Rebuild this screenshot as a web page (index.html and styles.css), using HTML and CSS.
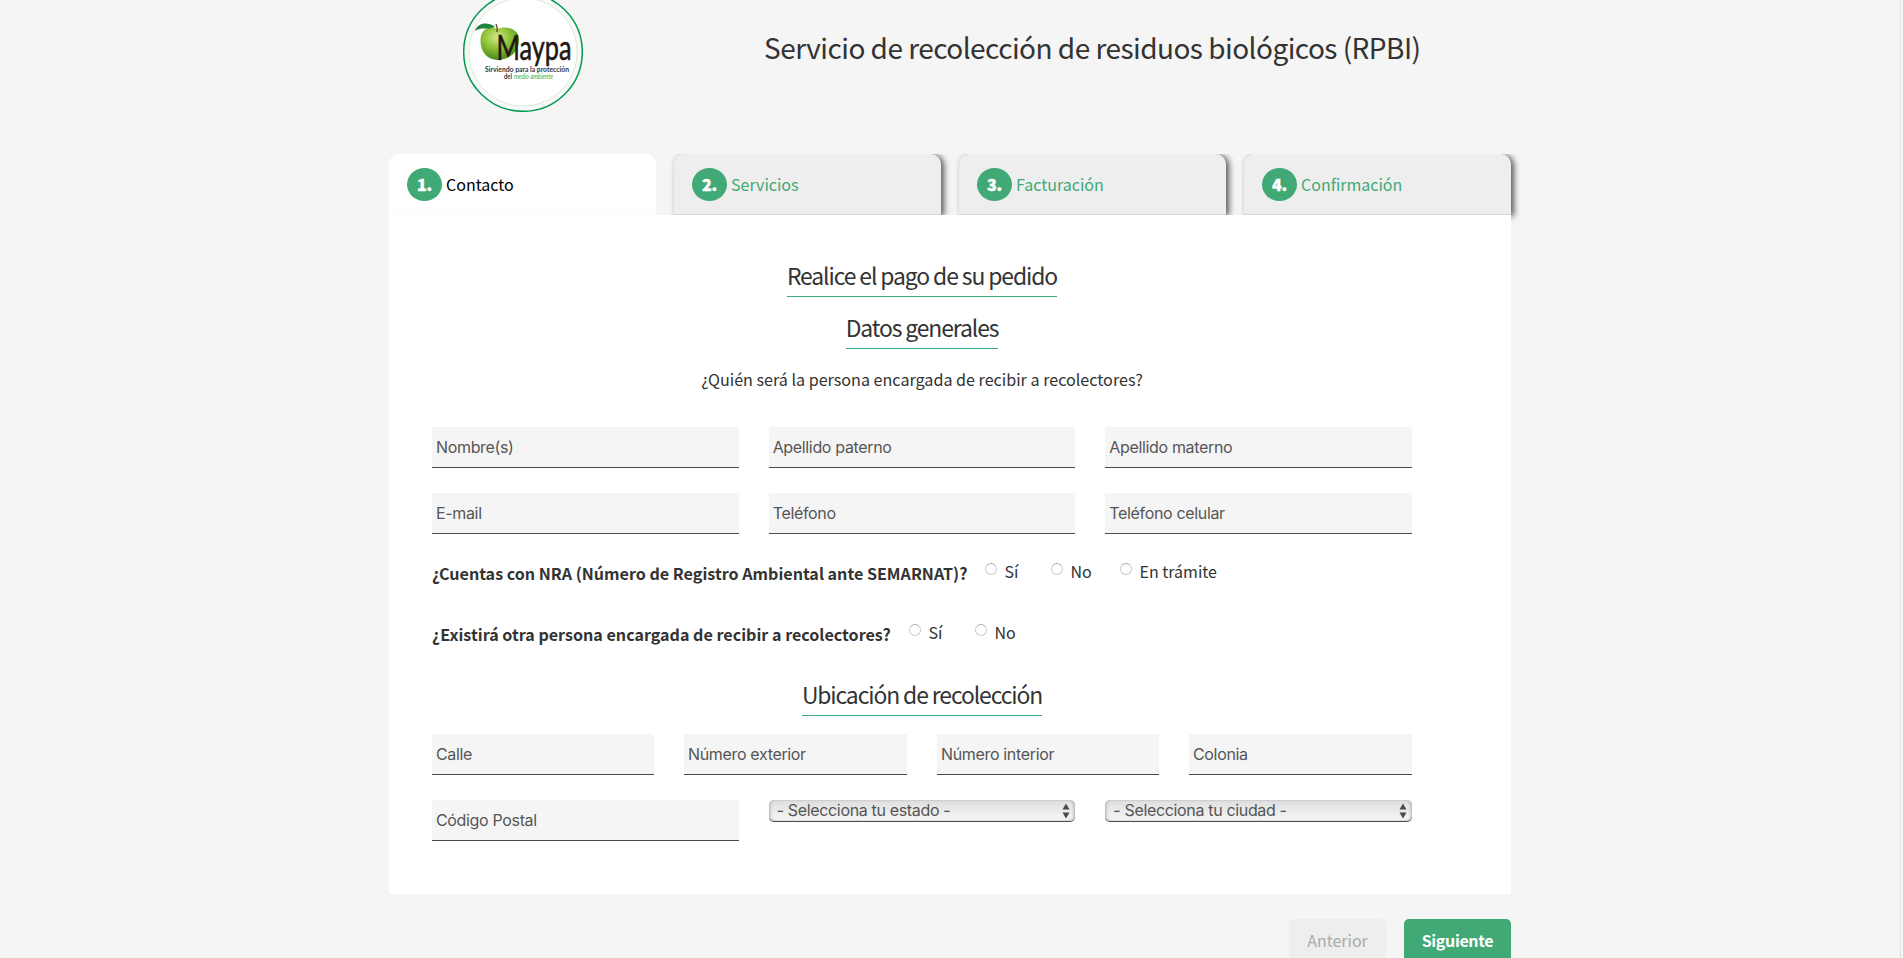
FILE: index.html
```html
<!DOCTYPE html>
<html lang="es">
<head>
<meta charset="utf-8">
<title>Maypa</title>
<link rel="stylesheet" href="styles.css">
</head>
<body>
<div class="page">
  <header class="header">
    <svg class="logo" width="120" height="112" viewBox="0 0 120 112">
      <defs>
        <radialGradient id="apple" cx="0.42" cy="0.3" r="0.75">
          <stop offset="0" stop-color="#d3e88a"/>
          <stop offset="0.4" stop-color="#96c83d"/>
          <stop offset="0.8" stop-color="#5d9a22"/>
          <stop offset="1" stop-color="#3f7a1c"/>
        </radialGradient>
      </defs>
      <circle cx="60" cy="52" r="59.3" fill="#f8f8f8" stroke="#049a50" stroke-width="1.5"/>
      <circle cx="60" cy="52" r="54" fill="#fff" stroke="#b5dcb2" stroke-width="0.8" stroke-dasharray="2 1"/>
      <path d="M34 29 C28 25 18 28 17.500 40 C17 52 25 60 34 60 C48 60 57 50 56 38 C55 29 44 25 34 29Z" fill="url(#apple)"/>
      <path d="M12 31 C14 23 24 21 32 26.500 C26 31 19 26 12 31Z" fill="#1f8540"/>
      <path d="M34 32 C34.500 28 34 26 33 24" fill="none" stroke="#6b3f1e" stroke-width="1.300"/>
      <text class="logo-name" x="33.500" y="60" textLength="75" lengthAdjust="spacingAndGlyphs">Maypa</text>
      <text class="logo-tag" x="22" y="72" textLength="84" lengthAdjust="spacingAndGlyphs">Sirviendo para la protección</text>
      <text class="logo-tag" x="41" y="79" textLength="8" lengthAdjust="spacingAndGlyphs">del</text>
      <text class="logo-tag logo-green" x="51" y="79" textLength="39" lengthAdjust="spacingAndGlyphs">medio ambiente</text>
    </svg>
    <h1 class="title">Servicio de recolección de residuos biológicos (RPBI)</h1>
  </header>

  <nav class="tabs">
    <a class="tab tab-current"><span class="num">1.</span>Contacto</a>
    <a class="tab"><span class="num">2.</span>Servicios</a>
    <a class="tab"><span class="num">3.</span>Facturación</a>
    <a class="tab"><span class="num">4.</span>Confirmación</a>
  </nav>

  <main class="panel">
    <h2 class="heading"><span>Realice el pago de su pedido</span></h2>
    <h2 class="heading"><span>Datos generales</span></h2>
    <p class="lead">¿Quién será la persona encargada de recibir a recolectores?</p>

    <div class="row">
      <div class="field">Nombre(s)</div>
      <div class="field">Apellido paterno</div>
      <div class="field">Apellido materno</div>
    </div>
    <div class="row">
      <div class="field">E-mail</div>
      <div class="field">Teléfono</div>
      <div class="field">Teléfono celular</div>
    </div>

    <div class="question">
      <strong class="ask ask-nra">¿Cuentas con NRA (Número de Registro Ambiental ante SEMARNAT)?</strong>
      <label class="opt opt-yes"><i class="radio"></i>Sí</label>
      <label class="opt opt-no"><i class="radio"></i>No</label>
      <label class="opt"><i class="radio"></i>En trámite</label>
    </div>
    <div class="question">
      <strong class="ask ask-other">¿Existirá otra persona encargada de recibir a recolectores?</strong>
      <label class="opt opt-yes"><i class="radio"></i>Sí</label>
      <label class="opt"><i class="radio"></i>No</label>
    </div>

    <h2 class="heading heading-place"><span>Ubicación de recolección</span></h2>
    <div class="row row-four">
      <div class="field">Calle</div>
      <div class="field">Número exterior</div>
      <div class="field">Número interior</div>
      <div class="field">Colonia</div>
    </div>
    <div class="row">
      <div class="field">Código Postal</div>
      <div class="select">- Selecciona tu estado -<svg width="8" height="16" viewBox="0 0 8 16"><path d="M4 .5 7.500 6.500H.5ZM4 15.500.5 9.500H7.500Z" fill="#4a4a4a"/></svg></div>
      <div class="select">- Selecciona tu ciudad -<svg width="8" height="16" viewBox="0 0 8 16"><path d="M4 .5 7.500 6.500H.5ZM4 15.500.5 9.500H7.500Z" fill="#4a4a4a"/></svg></div>
    </div>
  </main>

  <footer class="actions">
    <a class="btn btn-prev">Anterior</a>
    <a class="btn btn-next">Siguiente</a>
  </footer>
</div>
<div class="scroll-edge"></div>
</body>
</html>
```
FILE: styles.css
```css
* { box-sizing: border-box; }

html, body { height: 100%; }

body {
  margin: 0;
  overflow: hidden;
  background: #f5f5f5;
  color: #333;
  font-family: "Noto Sans CJK SC", "Noto Sans", sans-serif;
  font-size: 16px;
}

.page { width: 1122px; margin-left: 389px; }

.header {
  display: flex;
  align-items: flex-start;
  height: 154px;
  padding-left: 74px;
}

.logo { display: block; flex: none; }
.logo-name { font: 34px "Lato", sans-serif; fill: #231815; stroke: #231815; stroke-width: .6px; }
.logo-tag { font: bold 7.5px "Lato", sans-serif; fill: #333; }
.logo-green { font-weight: normal; font-style: italic; fill: #43ab45; }

.title {
  margin: 27px 0 0 181px;
  font-size: 28px;
  font-weight: 400;
  letter-spacing: -.53px;
  line-height: 41px;
  white-space: nowrap;
}

.tabs { display: flex; gap: 18px; height: 61px; }

.tab {
  display: flex;
  align-items: flex-start;
  width: 267px;
  height: 61px;
  padding: 14px 18px 0;
  border-bottom: 1px solid #d5d5d5;
  border-radius: 10px 10px 0 0;
  background: #eee;
  box-shadow: 3px 1px 6px rgba(0, 0, 0, .65);
  clip-path: inset(0 -14px -7px -6px);
  color: #41a975;
  line-height: 33px;
}
.tab-current { background: #fff; border-color: #fafafa; box-shadow: none; color: #000; }

.num {
  width: 35px;
  height: 33px;
  margin-right: 4px;
  border-radius: 50%;
  background: #41a975;
  color: #fff;
  font-weight: 900;
  text-align: center;
  letter-spacing: -.2px;
  -webkit-text-stroke: .4px #fff;
}

.panel {
  position: relative;
  height: 679px;
  padding: 44px 99px 0 43px;
  background: #fff;
}

.heading {
  width: 980px;
  height: 52px;
  margin: 0;
  font-size: 22.9px;
  font-weight: 400;
  letter-spacing: -1.1px;
  line-height: 32px;
  text-align: center;
}
.heading span { display: inline-block; height: 38px; border-bottom: 1px solid #41a975; }
.heading-place { height: 56px; margin-top: -3px; }

.lead { margin: 1px 0 0; height: 63px; font-size: 16.13px; line-height: 30px; text-align: center; }

.row { display: grid; grid-template-columns: repeat(3, 1fr); gap: 30px; height: 66px; align-items: start; }
.row-four { grid-template-columns: 222px 223px 222px 223px; }

.field, .select {
  border-bottom: 1px solid #4a4a4a;
  color: #555;
  font-family: "Inter", sans-serif;
  font-size: 16px;
  letter-spacing: -.34px;
}
.field { height: 41px; padding-left: 4px; background: #f5f5f5; line-height: 40px; }

.select {
  display: flex;
  justify-content: space-between;
  align-items: center;
  height: 22px;
  padding: 0 5px 0 8px;
  border-radius: 5px;
  background: linear-gradient(#dedede, #f6f6f6);
  box-shadow: inset 2px 0 3px -1px #aaa, inset -2px 0 3px -1px #aaa;
  line-height: 21px;
}

.question { display: flex; align-items: flex-start; height: 61px; line-height: 24px; }
.ask { flex: none; padding-top: 2px; font-size: 16.1px; font-weight: 700; white-space: nowrap; }
.ask-nra { width: 553px; }
.ask-other { width: 477px; }
.opt { display: flex; gap: 7.5px; margin-right: 29px; }
.opt-yes { width: 66px; margin-right: 0; }
.opt-no { width: 69px; margin-right: 0; }
.radio {
  width: 12px;
  height: 12px;
  margin-top: 4px;
  border: 1px solid #ccc;
  border-top-color: #aaa;
  border-radius: 50%;
  background: #fff;
}

.actions { display: flex; justify-content: flex-end; gap: 18px; padding-top: 25px; }
.btn { width: 107px; height: 50px; border-radius: 5px; line-height: 42px; text-align: center; }
.btn-prev { width: 97px; background: #eee; color: #aaa; }
.btn-next { background: #41a975; color: #fff; font-weight: 700; letter-spacing: -.35px; }

.scroll-edge {
  position: absolute;
  top: 0;
  right: 0;
  width: 3px;
  height: 100%;
  border-left: 1px solid #e2e2e2;
  background: #f8f8f8;
}
```
